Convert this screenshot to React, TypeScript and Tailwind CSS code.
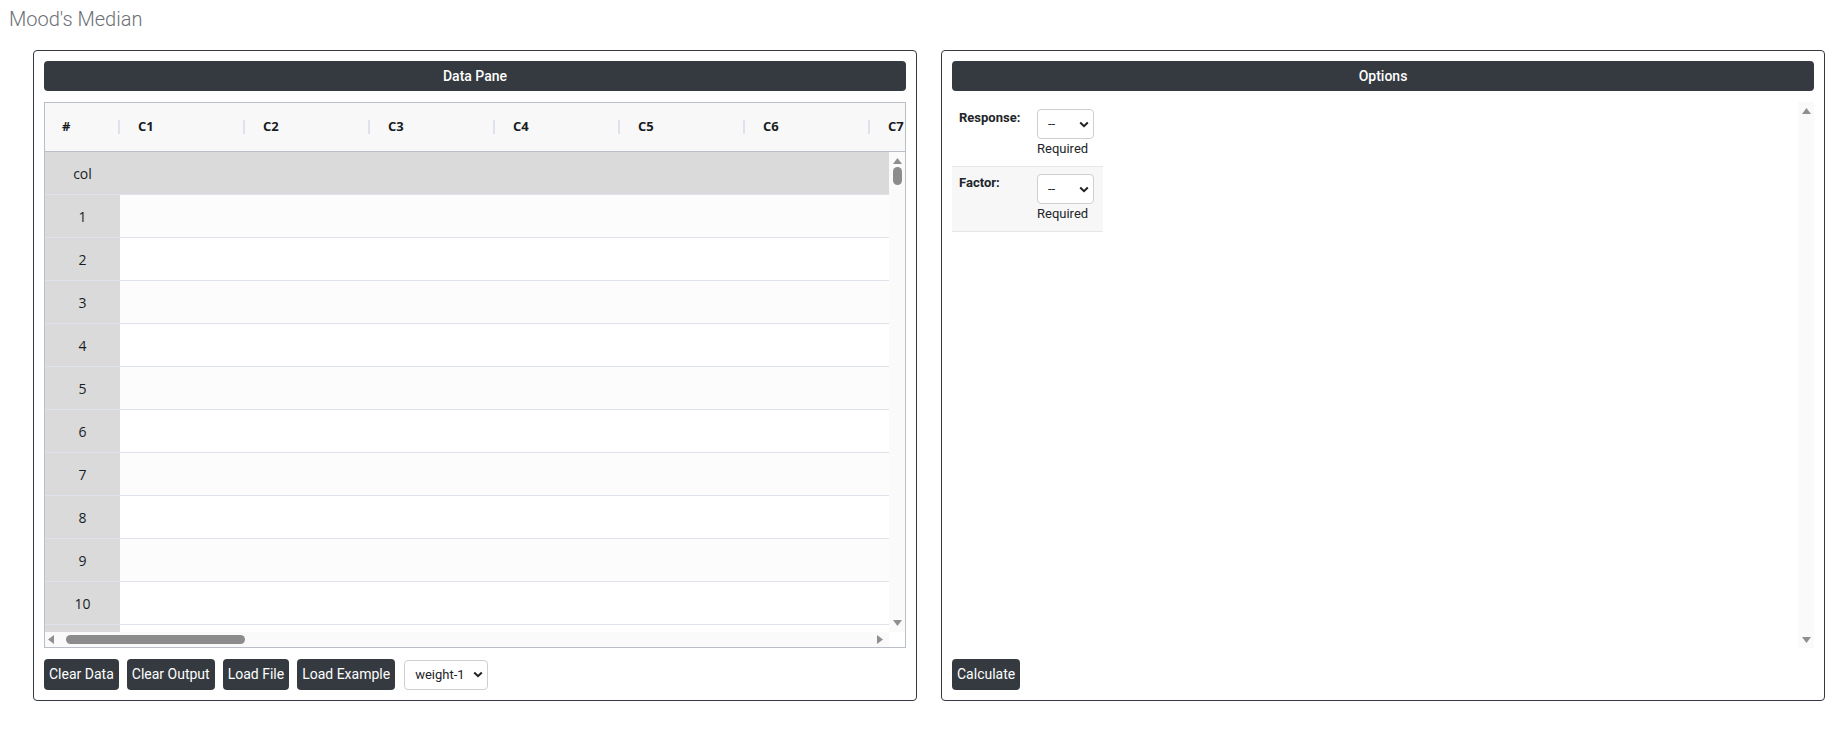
import React from "react";

const roboto = { fontFamily: "Roboto, 'Liberation Sans', sans-serif" };
const grid = { fontFamily: "'Open Sans', 'Noto Sans', sans-serif" };

function Chevron() {
  return (
    <svg width="10" height="7" viewBox="0 0 10 7">
      <path d="M1.2 1.5 L5 5.2 L8.8 1.5" stroke="#222" strokeWidth="2" fill="none" />
    </svg>
  );
}

function Up() {
  return (
    <svg width="9" height="6" viewBox="0 0 9 6">
      <polygon points="0,6 4.5,0 9,6" fill="#8f8f8f" />
    </svg>
  );
}
function Down() {
  return (
    <svg width="9" height="6" viewBox="0 0 9 6">
      <polygon points="0,0 4.5,6 9,0" fill="#8f8f8f" />
    </svg>
  );
}
function Left() {
  return (
    <svg width="6" height="9" viewBox="0 0 6 9">
      <polygon points="6,0 0,4.5 6,9" fill="#8f8f8f" />
    </svg>
  );
}
function Right() {
  return (
    <svg width="6" height="9" viewBox="0 0 6 9">
      <polygon points="0,0 6,4.5 0,9" fill="#8f8f8f" />
    </svg>
  );
}

function FakeSelect({ label, w, pl }: { label: string; w: string; pl: string }) {
  return (
    <div
      className={`${w} h-[30px] border border-[#cfcfcf] rounded-[4px] bg-white flex items-center justify-between ${pl} pr-[4px] text-[13px] text-[#212529]`}
      style={roboto}
    >
      <span>{label}</span>
      <Chevron />
    </div>
  );
}

function DarkButton({ children }: { children: React.ReactNode }) {
  return (
    <div
      className="h-[31px] px-[5px] bg-[#343a40] rounded-[4px] text-white text-[14px] flex items-center"
      style={roboto}
    >
      {children}
    </div>
  );
}

function PaneHeader({ title }: { title: string }) {
  return (
    <div
      className="h-[30px] shrink-0 bg-[#343a40] rounded-[4px] text-white text-[14px] font-medium flex items-center justify-center"
      style={roboto}
    >
      {title}
    </div>
  );
}

const cols = ["C1", "C2", "C3", "C4", "C5", "C6", "C7"];
const rows = [1, 2, 3, 4, 5, 6, 7, 8, 9, 10];

function DataGrid() {
  return (
    <div className="mt-[11px] h-[547px] border border-[#babfc7] flex flex-col overflow-hidden" style={grid}>
      {/* header */}
      <div className="h-[49px] shrink-0 flex bg-[#f8f8f8] border-b border-[#babfc7] overflow-hidden text-[13px] font-bold text-[#181d1f]">
        <div className="w-[75px] shrink-0 flex items-center">
          <span className="pl-[17px]">#</span>
          <div className="ml-auto w-[2px] h-[14px] bg-[#dde2eb]" />
        </div>
        {cols.map((c) => (
          <div key={c} className="w-[125px] shrink-0 flex items-center">
            <span className="pl-[18px]">{c}</span>
            <div className="ml-auto w-[2px] h-[14px] bg-[#dde2eb]" />
          </div>
        ))}
      </div>
      {/* body */}
      <div className="flex-1 flex min-h-0">
        <div className="flex-1 flex flex-col overflow-hidden text-[14px] text-[#181d1f]">
          <div className="h-[43px] shrink-0 flex bg-[#dadada] border-b border-[#dde2eb]">
            <div className="w-[75px] flex items-center justify-center">col</div>
          </div>
          {rows.map((r) => (
            <div
              key={r}
              className={`h-[43px] shrink-0 flex border-b border-[#dde2eb] ${r % 2 === 1 ? "bg-[#fcfcfc]" : "bg-white"}`}
            >
              <div className="w-[75px] shrink-0 bg-[#dadada] flex items-center justify-center">{r}</div>
              <div className="flex-1" />
            </div>
          ))}
          <div className="h-[43px] shrink-0 flex bg-white">
            <div className="w-[75px] shrink-0 bg-[#dadada]" />
            <div className="flex-1" />
          </div>
        </div>
        <div className="w-[16px] shrink-0 bg-[#fafafa] flex flex-col items-center pt-[6px] pb-[6px]">
          <Up />
          <div className="mt-[3px] w-[9px] h-[18px] rounded-full bg-[#8c8c8c]" />
          <div className="flex-1" />
          <Down />
        </div>
      </div>
      {/* horizontal scrollbar */}
      <div className="h-[15px] shrink-0 flex">
        <div className="flex-1 bg-[#fafafa] flex items-center pl-[3px] pr-[6px]">
          <Left />
          <div className="ml-[12px] w-[179px] h-[9px] rounded-full bg-[#8c8c8c]" />
          <div className="flex-1" />
          <Right />
        </div>
        <div className="w-[16px] shrink-0 bg-white" />
      </div>
    </div>
  );
}

function OptionRow({ label, shaded }: { label: string; shaded?: boolean }) {
  return (
    <div
      className={`flex ${shaded ? "bg-[#f7f7f7] border-t border-b border-[#e6e6e6] h-[66px]" : "h-[64px]"}`}
    >
      <div className="w-[85px] pl-[7px] pt-[6px] text-[13px] font-bold text-[#212529]" style={roboto}>
        {label}
      </div>
      <div className="pt-[7px] w-[66px]">
        <FakeSelect label="--" w="w-[57px]" pl="pl-[10px]" />
        <div className="mt-[1px] text-[13px] leading-[17px] text-[#212529]" style={roboto}>
          Required
        </div>
      </div>
    </div>
  );
}

export default function App() {
  return (
    <div className="w-[1840px] h-[740px] bg-white overflow-hidden">
      <div className="h-[50px] pl-[9px] pt-[5px]">
        <div className="text-[20px] leading-[28px] font-light text-[#6c7075]" style={roboto}>
          Mood's Median
        </div>
      </div>
      <div className="flex pl-[33px] gap-[24px]">
        {/* Data pane */}
        <div className="w-[884px] h-[651px] border border-[#343a40] rounded-[4px] p-[10px] flex flex-col">
          <PaneHeader title="Data Pane" />
          <DataGrid />
          <div className="mt-[11px] flex items-center gap-[8px]">
            <DarkButton>Clear Data</DarkButton>
            <DarkButton>Clear Output</DarkButton>
            <DarkButton>Load File</DarkButton>
            <DarkButton>Load Example</DarkButton>
            <div className="ml-[1px]">
              <FakeSelect label="weight-1" w="w-[84px]" pl="pl-[10px]" />
            </div>
          </div>
        </div>
        {/* Options */}
        <div className="w-[884px] h-[651px] border border-[#343a40] rounded-[4px] p-[10px] flex flex-col">
          <PaneHeader title="Options" />
          <div className="mt-[11px] h-[547px] flex">
            <div className="flex-1">
              <div className="w-[151px]">
                <OptionRow label="Response:" />
                <OptionRow label="Factor:" shaded />
              </div>
            </div>
            <div className="w-[16px] shrink-0 bg-[#fafafa] flex flex-col items-center pt-[6px] pb-[5px]">
              <Up />
              <div className="flex-1" />
              <Down />
            </div>
          </div>
          <div className="mt-[11px] flex">
            <DarkButton>Calculate</DarkButton>
          </div>
        </div>
      </div>
    </div>
  );
}
